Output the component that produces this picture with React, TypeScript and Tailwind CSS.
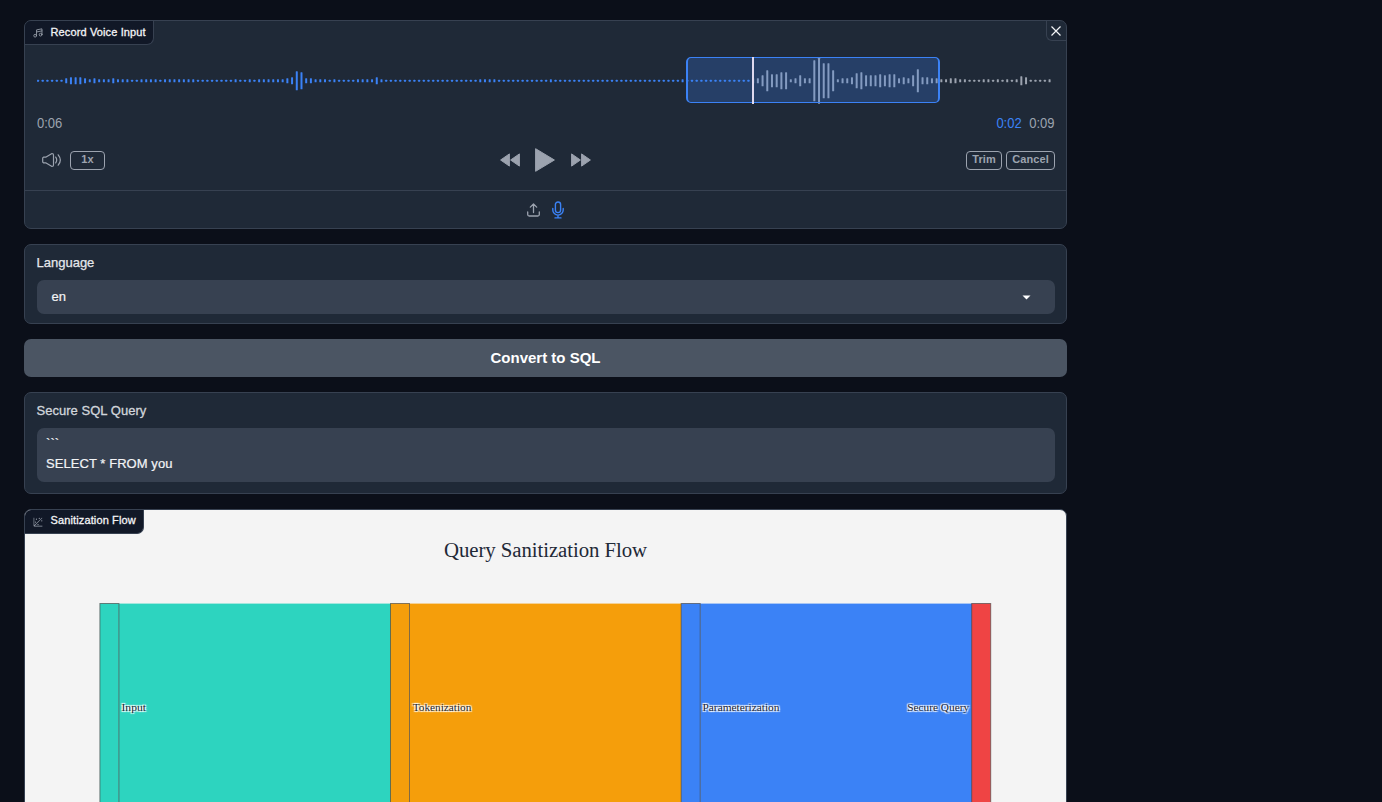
const r = (n: number, h: number): number[] => Array(n).fill(h);

const levels: number[] = [
  ...r(6, 2), 5, 7, 7, 7, 5, 3, 5, 3, 3, 3, 5, 3, 3, 3, 2, 2, 3, 3, 3, 3, 2, ...r(7, 3),
  ...r(8, 2), 3, 2, 2, 3, 2, ...r(6, 3), 5, 7, 19, 17, 5, 5, 3, 3, 3, 2, 3, 2, 2, 2, 2,
  3, 3, 3, 3, 7, 3, ...r(20, 2), 3, 3, 3, 3, ...r(11, 2), 3, ...r(27, 2), 3, ...r(14, 2),
  5, 5, 11, 21, 13, 13, 17, 17, 3, 5, 11, 5, 5, 41, 46, 35, 35, 21, 3, 5, 5, 7, 15, 17, 11,
  11, 11, 13, 11, 13, 13, 5, 7, 5, 11, 23, 7, 7, 5, 5, 3, 3, 5, 5, 3, 3, 2, 2, 2, 3, 3, 2, 3, 2, 3, 2,
  3, 9, 7, 2, 2, 2, 2, 3,
];

const PITCH = 4.705;

function Waveform() {
  return (
    <div className="relative h-[48px] w-full">
      <svg className="block h-full w-full" viewBox="0 0 1018 48">
        {levels.map((h, i) => (
          <rect
            key={i}
            x={i * PITCH}
            y={24.8 - h / 2}
            width="2"
            height={h}
            rx="0.4"
            fill={i < 152 ? "#3b82f6" : "#9ca3af"}
          />
        ))}
      </svg>
      <div className="absolute left-[649px] top-[1px] h-[46px] w-[254px] rounded-[5px] border border-x-2 border-[#3b82f6] bg-[#3b82f6]/25" />
      <div className="absolute left-[715px] top-[1px] h-[47px] w-[2px] bg-[#ded8ee]" />
    </div>
  );
}

function MusicIcon() {
  return (
    <svg width="10" height="10" viewBox="0 0 24 24" fill="none" stroke="currentColor" strokeWidth="2" strokeLinecap="round" strokeLinejoin="round">
      <path d="M8.500 18V4.500l13-2.500v13.500" />
      <circle cx="5.200" cy="18.500" r="3.300" />
      <circle cx="18.200" cy="16" r="3.300" />
      <path d="M8.500 9.500l13-2.500" />
    </svg>
  );
}

function PlotIcon() {
  return (
    <svg width="10" height="10" viewBox="0 0 32 32" fill="currentColor">
      <circle cx="20" cy="4" r="2" />
      <circle cx="8" cy="16" r="2" />
      <circle cx="28" cy="12" r="2" />
      <circle cx="11" cy="7" r="2" />
      <circle cx="16" cy="24" r="2" />
      <path d="M30 3.4 28.6 2 4 26.600V2H2v26a2 2 0 0 0 2 2h26v-2H5.400Z" />
    </svg>
  );
}

function VolumeIcon() {
  return (
    <svg width="20" height="16" viewBox="0 0 20 16" fill="none" stroke="currentColor" strokeWidth="1.2" strokeLinecap="round" strokeLinejoin="round">
      <path d="M1.500 5.200h2.200L10 1.500q1.500 0 1.500 1.500v10q0 1.500-1.500 1.500l-6.300-3.700H1.500L.700 10V6Z" />
      <path d="M13.700 5.100q2 2.900 0 5.800M16.200 2.800q4.300 5.200 0 10.400" />
    </svg>
  );
}

function SkipIcon({ flip = false }: { flip?: boolean }) {
  return (
    <svg className={flip ? "-scale-x-100" : ""} width="20" height="14" viewBox="0 0 20 14" fill="#9ca3af" stroke="#9ca3af" strokeLinejoin="round">
      <path d="M.6 7 9.400.9v12.200ZM10.600 7l8.800-6.100v12.200Z" />
    </svg>
  );
}

function BlockLabel({ icon, children }: { icon: React.ReactNode; children: React.ReactNode }) {
  return (
    <div className="flex h-[24px] w-fit items-center gap-[7.5px] rounded-br-[7px] border-b border-r border-[#374151] bg-[#111827] pl-2 pr-[7px] text-[11px] tracking-[0.13px] text-[#f3f4f6]">
      <span className="text-[#9ca3af]">{icon}</span>
      <span className="-mt-[1px] [-webkit-text-stroke:0.3px]">{children}</span>
    </div>
  );
}

const pill =
  "flex h-[19px] items-center justify-center rounded-[4px] border border-[#9ca3af] pb-[1px] text-[11px] font-bold tracking-[0.1px] text-[#9ca3af]";

const panel = "overflow-hidden rounded-[7px] border border-[#374151] bg-[#1f2937]";

const nodes = [
  { x: 75.4, color: "#2dd4bf", link: "#2dd4bf", label: "Input", lx: 97, w: 24.5 },
  { x: 366, color: "#f59e0b", link: "#f59e0b", label: "Tokenization", lx: 388.3, w: 58.5 },
  { x: 656.7, color: "#3b82f6", link: "#3b82f6", label: "Parameterization", lx: 678, w: 77 },
  { x: 947.2, color: "#ef4444", link: "", label: "Secure Query", lx: 882.7, w: 62 },
];

function Sankey() {
  return (
    <svg className="block h-[292px] w-full font-['Liberation_Serif',serif]" viewBox="0.5 0 1041 292">
      <text x="521" y="47" fontSize="20.8" textAnchor="middle" fill="#1f2937" textLength="203">
        Query Sanitization Flow
      </text>
      {nodes.map((n) => n.link && <rect key={n.label} x={n.x + 19} y="93.6" width="272" height="210" fill={n.link} />)}
      {nodes.map((n) => (
        <rect key={n.label} x={n.x} y="93.5" width="19" height="210" fill={n.color} stroke="#444" strokeOpacity="0.65" />
      ))}
      {nodes.map((n) => (
        <text
          key={n.label}
          x={n.lx}
          y="201"
          fontSize="11"
          textLength={n.w}
          lengthAdjust="spacingAndGlyphs"
          fill="#1f2937"
          className="[text-shadow:1px_1px_1px_#fff,-1px_-1px_1px_#fff,1px_-1px_1px_#fff,-1px_1px_1px_#fff]"
        >
          {n.label}
        </text>
      ))}
    </svg>
  );
}

export default function App() {
  return (
    <div className="h-[802px] overflow-hidden bg-[#0b0f19] pl-6 pt-5 font-['Liberation_Sans',Arial,sans-serif]">
      <main className="flex w-[1043px] flex-col gap-[15px]">
        <section className={`${panel} flex h-[209px] flex-col`}>
          <div className="flex items-start justify-between">
            <BlockLabel icon={<MusicIcon />}>Record Voice Input</BlockLabel>
            <button className="flex h-[20px] w-[20px] items-center justify-center rounded-bl-[6px] border-b border-l border-[#374151] text-[#f3f4f6]">
              <svg width="11" height="10" viewBox="0 0 11 10" stroke="currentColor" strokeWidth="1.2">
                <path d="m.5.5 9 9m0-9-9 9" />
              </svg>
            </button>
          </div>
          <div className="mt-[11px] pl-3 pr-[11px]">
            <Waveform />
          </div>
          <div className="mt-[10px] flex h-[18px] items-center justify-between px-3 text-[14px] text-[#9ca3af]">
            <span className="origin-left scale-x-[0.93]">0:06</span>
            <span className="flex origin-right scale-x-[0.93] gap-2">
              <span className="text-[#3b82f6]">0:02</span>
              <span>0:09</span>
            </span>
          </div>
          <div className="mt-[15px] grid h-[26px] grid-cols-[1fr_auto_1fr] items-center pl-3 pr-[11px] text-[#9ca3af]">
            <div className="flex items-center gap-[8px] pl-[5px]">
              <VolumeIcon />
              <button className={`${pill} w-[35px]`}>1x</button>
            </div>
            <div className="flex items-center justify-center gap-[15px] pr-px">
              <SkipIcon />
              <svg width="20" height="24" viewBox="0 0 20 24" fill="#9ca3af" stroke="#9ca3af" strokeLinejoin="round">
                <path d="M.6.7v22.600L19.400 12Z" />
              </svg>
              <span className="pl-px">
                <SkipIcon flip />
              </span>
            </div>
            <div className="flex justify-end gap-1">
              <button className={`${pill} w-[36px]`}>Trim</button>
              <button className={`${pill} w-[49px]`}>Cancel</button>
            </div>
          </div>
          <div className="mt-auto flex h-[38px] items-center justify-center gap-[12px] border-t border-[#374151] pr-px text-[#9ca3af]">
            <svg width="13" height="14" viewBox="0 0 13 14" fill="none" stroke="currentColor" strokeWidth="1.3" strokeLinecap="round" strokeLinejoin="round">
              <path d="M.7 9v2.500q0 1.500 1.500 1.500h8.600q1.500 0 1.500-1.500V9M6.500 9.500V1M3.300 4.100 6.500 1l3.200 3.100" />
            </svg>
            <svg className="text-[#3b82f6]" width="12" height="18" viewBox="0 0 12 18" fill="none" stroke="currentColor" strokeWidth="1.4" strokeLinecap="round" strokeLinejoin="round">
              <rect x="3.400" y="1" width="5.200" height="10.600" rx="2.600" />
              <path d="M.8 7.500v1.400a5.200 5.200 0 0 0 10.400 0V7.500M6 14.200v2.600M3 16.900h6" />
            </svg>
          </div>
        </section>

        <section className={`${panel} h-[80px] pl-3 pr-[11px] pt-[9px]`}>
          <div className="-ml-[0.5px] text-[13px] leading-[18px] text-[#e5e7eb] [-webkit-text-stroke:0.25px]">Language</div>
          <div className="mt-[8px] flex h-[34px] items-center justify-between rounded-[7px] bg-[#374151] pl-[15px] pr-6 text-[13px] text-[#f3f4f6]">
            <span className="-ml-[0.5px] [-webkit-text-stroke:0.2px]">en</span>
            <svg width="9" height="5" viewBox="0 0 9 5" fill="#fff">
              <path d="M.5.5h8l-4 4Z" />
            </svg>
          </div>
        </section>

        <button className="flex h-[38px] shrink-0 items-center justify-center rounded-[7px] bg-[#4b5563] text-[15px] font-bold text-white">
          Convert to SQL
        </button>

        <section className={`${panel} h-[102px] pl-3 pr-[11px] pt-[9px]`}>
          <div className="-ml-[0.5px] text-[13px] leading-[18px] text-[#d1d5db] tracking-[0.03px] [-webkit-text-stroke:0.3px]">Secure SQL Query</div>
          <div className="mt-[8px] h-[54px] rounded-[7px] bg-[#374151] px-[9px] pt-[6px] text-[13px] leading-[20px] tracking-[0.06px] text-[#f3f4f6] [-webkit-text-stroke:0.2px]">
            <div>```</div>
            <div>SELECT * FROM you</div>
          </div>
        </section>

        <section className="relative h-[400px] overflow-hidden rounded-t-[7px] border border-[#374151] bg-[#f4f4f4]">
          <Sankey />
          <div className="absolute left-0 top-0">
            <BlockLabel icon={<PlotIcon />}>
              <span className="block -translate-y-px">Sanitization Flow</span>
            </BlockLabel>
          </div>
        </section>
      </main>
    </div>
  );
}
